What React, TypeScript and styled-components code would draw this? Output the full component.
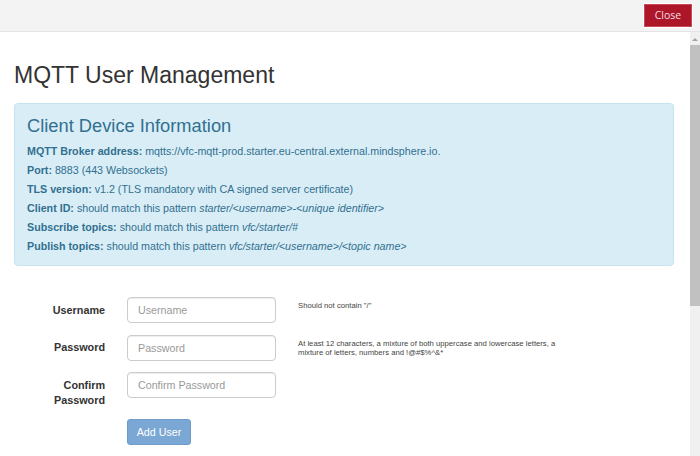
import styled, { createGlobalStyle } from "styled-components";

const GlobalStyle = createGlobalStyle`
  html, body {
    margin: 0;
    height: 100%;
    overflow: hidden;
    background: #ffffff;
    font-family: "Liberation Sans", Arial, sans-serif;
    color: #333333;
  }
  * { box-sizing: border-box; }
`;

export default function App() {
  return (
    <>
      <GlobalStyle />
      <TopBar>
        <CloseButton>Close</CloseButton>
      </TopBar>
      <Body>
        <Page>
          <Title>MQTT User Management</Title>
          <InfoBox>
            <InfoHeading>Client Device Information</InfoHeading>
            <InfoLine>
              <b>MQTT Broker address:</b> mqtts://vfc-mqtt-prod.starter.eu-central.external.mindsphere.io.
            </InfoLine>
            <InfoLine>
              <b>Port:</b> 8883 (443 Websockets)
            </InfoLine>
            <InfoLine>
              <b>TLS version:</b> v1.2 (TLS mandatory with CA signed server certificate)
            </InfoLine>
            <InfoLine>
              <b>Client ID:</b> should match this pattern{" "}
              <i>starter/&lt;username&gt;-&lt;unique identifier&gt;</i>
            </InfoLine>
            <InfoLine>
              <b>Subscribe topics:</b> should match this pattern <i>vfc/starter/#</i>
            </InfoLine>
            <InfoLine>
              <b>Publish topics:</b> should match this pattern{" "}
              <i>vfc/starter/&lt;username&gt;/&lt;topic name&gt;</i>
            </InfoLine>
          </InfoBox>

          <Form>
            <FormRow>
              <Label>Username</Label>
              <Input placeholder="Username" />
              <Help>Should not contain "/"</Help>
            </FormRow>
            <FormRow>
              <Label>Password</Label>
              <Input type="password" placeholder="Password" />
              <Help>
                At least 12 characters, a mixture of both uppercase and lowercase letters, a
                mixture of letters, numbers and !@#$%^&amp;*
              </Help>
            </FormRow>
            <FormRow>
              <Label>Confirm Password</Label>
              <Input type="password" placeholder="Confirm Password" />
            </FormRow>
            <FormRow>
              <span />
              <div>
                <SubmitButton disabled>Add User</SubmitButton>
              </div>
            </FormRow>
          </Form>
        </Page>
        <ScrollTrack>
          <ScrollArrow />
          <ScrollThumb />
        </ScrollTrack>
      </Body>
    </>
  );
}

const TopBar = styled.div`
  height: 32px;
  display: flex;
  align-items: center;
  justify-content: flex-end;
  padding-right: 8px;
  background: #f3f3f3;
  border-bottom: 1px solid #e4e4e4;
`;

const CloseButton = styled.button`
  width: 48px;
  height: 23px;
  margin-top: -1px;
  padding: 0;
  background: #ad1528;
  border: 1px solid #c94858;
  outline: 1px solid #ffffff;
  color: #f6dfe2;
  font-family: "Open Sans", "Noto Sans", sans-serif;
  font-size: 10.5px;
  cursor: pointer;
`;

const Body = styled.div`
  display: flex;
  height: calc(100vh - 32px);
  overflow: hidden;
`;

const Page = styled.div`
  flex: 1;
  min-width: 0;
  padding: 31px 16px 0 14px;
`;

const ScrollTrack = styled.div`
  width: 10px;
  flex-shrink: 0;
  display: flex;
  flex-direction: column;
  align-items: center;
  background: #f0f0f0;
`;

const ScrollArrow = styled.div`
  width: 0;
  height: 0;
  margin-top: 6px;
  border-left: 3px solid transparent;
  border-right: 3px solid transparent;
  border-bottom: 3px solid #a3a3a3;
`;

const ScrollThumb = styled.div`
  width: 100%;
  height: 261px;
  margin-top: 4px;
  background: #c1c1c1;
`;

const Title = styled.h1`
  margin: 0 0 16px;
  font-size: 23px;
  line-height: 24px;
  font-weight: 400;
  color: #333333;
`;

const InfoBox = styled.div`
  padding: 11px 12px 9px;
  background: #d9edf7;
  border: 1px solid #c6e4f0;
  border-radius: 4px;
  color: #31708f;
`;

const InfoHeading = styled.h2`
  margin: 0 0 5px;
  font-size: 18.3px;
  line-height: 22px;
  font-weight: 400;
`;

const InfoLine = styled.div`
  font-size: 10.7px;
  line-height: 19px;
  white-space: nowrap;

  b {
    font-weight: 700;
  }
`;

const Form = styled.form`
  display: flex;
  flex-direction: column;
  gap: 11.5px;
  margin-top: 31px;
`;

const FormRow = styled.div`
  display: grid;
  grid-template-columns: 91px 149px 264px;
  column-gap: 22px;
  align-items: start;
`;

const Label = styled.label`
  padding-top: 5.5px;
  text-align: right;
  font-size: 10.8px;
  line-height: 15px;
  font-weight: 700;
  color: #333333;
`;

const Input = styled.input`
  width: 100%;
  height: 26px;
  padding: 0 10px;
  border: 1px solid #cccccc;
  border-radius: 4px;
  box-shadow: inset 0 1px 1px rgba(0, 0, 0, 0.075);
  font-family: "Liberation Sans", Arial, sans-serif;
  font-size: 10.7px;
  color: #555555;

  &::placeholder {
    color: #999999;
  }
`;

const Help = styled.div`
  padding-top: 4px;
  font-size: 7.7px;
  line-height: 9px;
  color: #444444;
`;

const SubmitButton = styled.button`
  width: 64px;
  height: 26px;
  padding: 0;
  background: #7aa7d3;
  border: 1px solid #6f9dca;
  border-radius: 3px;
  color: #ffffff;
  font-family: "Liberation Sans", Arial, sans-serif;
  font-size: 10.7px;
`;
